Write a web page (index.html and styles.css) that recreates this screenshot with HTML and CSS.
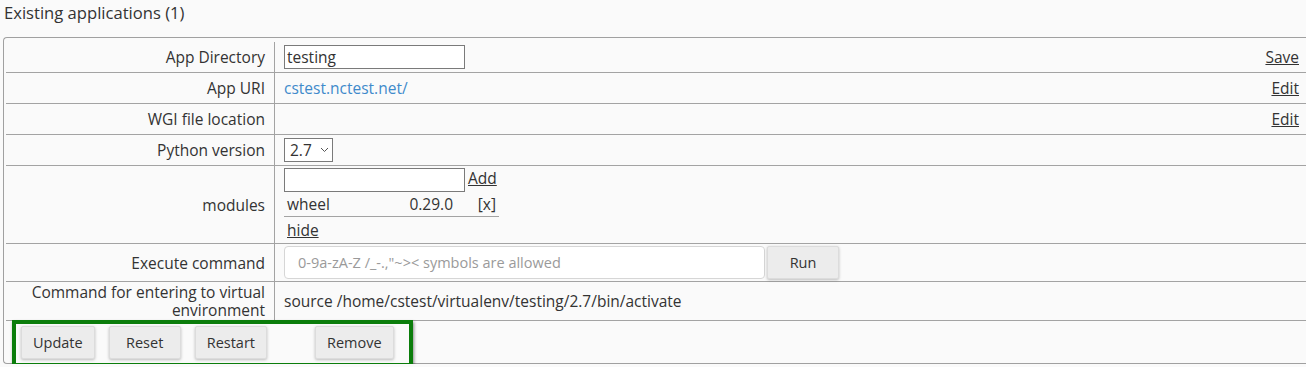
FILE: index.html
```html
<!DOCTYPE html>
<html lang="en">
<head>
  <meta charset="UTF-8">
  <title>Existing applications</title>
  <link rel="stylesheet" href="styles.css">
</head>
<body>

<h2 class="title">Existing applications (1)</h2>

<div class="panel">
  <table class="app-table">
    <tr>
      <td class="label">App Directory</td>
      <td class="value"><input type="text" class="field" value="testing"></td>
      <td class="action"><a href="#">Save</a></td>
    </tr>
    <tr>
      <td class="label">App URI</td>
      <td class="value"><a href="#" class="uri">cstest.nctest.net/</a></td>
      <td class="action"><a href="#">Edit</a></td>
    </tr>
    <tr>
      <td class="label">WGI file location</td>
      <td class="value"></td>
      <td class="action"><a href="#">Edit</a></td>
    </tr>
    <tr>
      <td class="label">Python version</td>
      <td class="value">
        <div class="select">2.7
          <svg class="caret" width="9" height="6" viewBox="0 0 9 6"><path d="M1 1l3.5 3.5L8 1" fill="none" stroke="#555" stroke-width="1"/></svg>
        </div>
      </td>
      <td class="action"></td>
    </tr>
    <tr class="tall">
      <td class="label">modules</td>
      <td class="value modules">
        <div class="module-add"><input type="text" class="field"><a href="#">Add</a></div>
        <div class="module-row">
          <span class="module-name">wheel</span>
          <span class="module-ver">0.29.0</span>
          <span class="module-del">[x]</span>
        </div>
        <div class="module-hide"><a href="#">hide</a></div>
      </td>
      <td class="action"></td>
    </tr>
    <tr class="exec-row">
      <td class="label">Execute command</td>
      <td class="value">
        <div class="exec">
          <input type="text" class="exec-input" placeholder="0-9a-zA-Z /_-.,&quot;~&gt;&lt; symbols are allowed">
          <button class="btn run">Run</button>
        </div>
      </td>
      <td class="action"></td>
    </tr>
    <tr class="venv-row">
      <td class="label">Command for entering to virtual environment</td>
      <td class="value">source /home/cstest/virtualenv/testing/2.7/bin/activate</td>
      <td class="action"></td>
    </tr>
    <tr class="last">
      <td colspan="3" class="buttons">
        <div class="highlight">
          <button class="btn">Update</button>
          <button class="btn">Reset</button>
          <button class="btn">Restart</button>
          <button class="btn remove">Remove</button>
        </div>
      </td>
    </tr>
  </table>
</div>

</body>
</html>
```

FILE: styles.css
```css
html, body {
  margin: 0;
  background: #fafafa;
  color: #333;
  font-family: 'Open Sans', sans-serif;
  font-size: 15.5px;
  overflow: hidden;
}

.title {
  margin: 0;
  padding: 2px 4px;
  font-size: 16.6px;
  font-weight: normal;
  line-height: 22px;
}

.panel {
  margin: 11px 0 0 3px;
  padding: 4px 0 0 2px;
  border: 1px solid #a0a0a0;
  border-right: none;
  border-radius: 4px 0 0 4px;
  height: 327px;
  box-sizing: border-box;
}

.app-table {
  width: 100%;
  border-collapse: collapse;
}

.app-table td {
  border-bottom: 1px solid #a3a3a3;
  padding: 0;
  height: 30px;
  vertical-align: middle;
}

.app-table tr.last td {
  border-bottom: none;
}

.label {
  width: 259px;
  text-align: right;
  padding-right: 9px !important;
  border-right: 1px solid #a3a3a3;
  line-height: 18px;
}

.value {
  padding-left: 9px !important;
  white-space: nowrap;
}

.action {
  text-align: right;
  padding-right: 7px !important;
}

a {
  color: #333;
}

a.uri {
  color: #3f8acb;
  text-decoration: none;
}

.field {
  width: 181px;
  height: 24px;
  box-sizing: border-box;
  border: 1px solid #7a7a7a;
  background: #fff;
  font-family: 'Open Sans', sans-serif;
  font-size: 15.5px;
  color: #333;
  padding: 0 2px;
  margin: 0;
  vertical-align: middle;
}

.select {
  display: inline-flex;
  align-items: center;
  width: 49px;
  height: 24px;
  box-sizing: border-box;
  border: 1px solid #7a7a7a;
  background: #fff;
  padding-left: 5px;
  gap: 8px;
  vertical-align: middle;
}

.modules {
  padding-top: 1px !important;
}

.module-add a {
  margin-left: 3px;
}

.module-row {
  display: flex;
  width: 215px;
  height: 24px;
  align-items: center;
  border-bottom: 1px solid #a3a3a3;
}

.module-name {
  padding-left: 3px;
  width: 100px;
}

.module-ver {
  width: 66px;
  text-align: right;
}

.module-del {
  margin-left: auto;
  padding-right: 3px;
}

.module-hide {
  height: 26px;
  line-height: 26px;
  padding-left: 3px;
}

.app-table tr.tall td {
  height: 76px;
}

.app-table tr.exec-row td {
  height: 37px;
}

.app-table tr.venv-row td {
  height: 38px;
}

.exec {
  display: flex;
  align-items: center;
  gap: 2px;
}

.exec-input {
  width: 481px;
  height: 33px;
  box-sizing: border-box;
  border: 1px solid #d6d6d6;
  border-radius: 4px;
  background: #fff;
  padding: 0 13px;
  font-family: 'Open Sans', sans-serif;
  font-size: 14.5px;
}

.exec-input::placeholder {
  color: #9a9a9a;
}

.btn {
  min-width: 72px;
  height: 33px;
  padding: 0 11px;
  border: 1px solid #dcdcdc;
  border-radius: 2px;
  background: #ececec;
  color: #333;
  font-family: 'Open Sans', sans-serif;
  font-size: 14.5px;
  box-shadow: 0 1px 3px rgba(0, 0, 0, 0.25);
  cursor: pointer;
}

.buttons {
  padding: 0 0 0 6px !important;
  vertical-align: top !important;
}

.highlight {
  display: inline-flex;
  align-items: center;
  gap: 14px;
  margin-top: -1px;
  padding: 2px 15px 4px 5px;
  border: 4px solid #0b7d0b;
  box-shadow: 1px 2px 3px rgba(0, 0, 0, 0.45);
}

.remove {
  margin-left: 34px;
}
```
